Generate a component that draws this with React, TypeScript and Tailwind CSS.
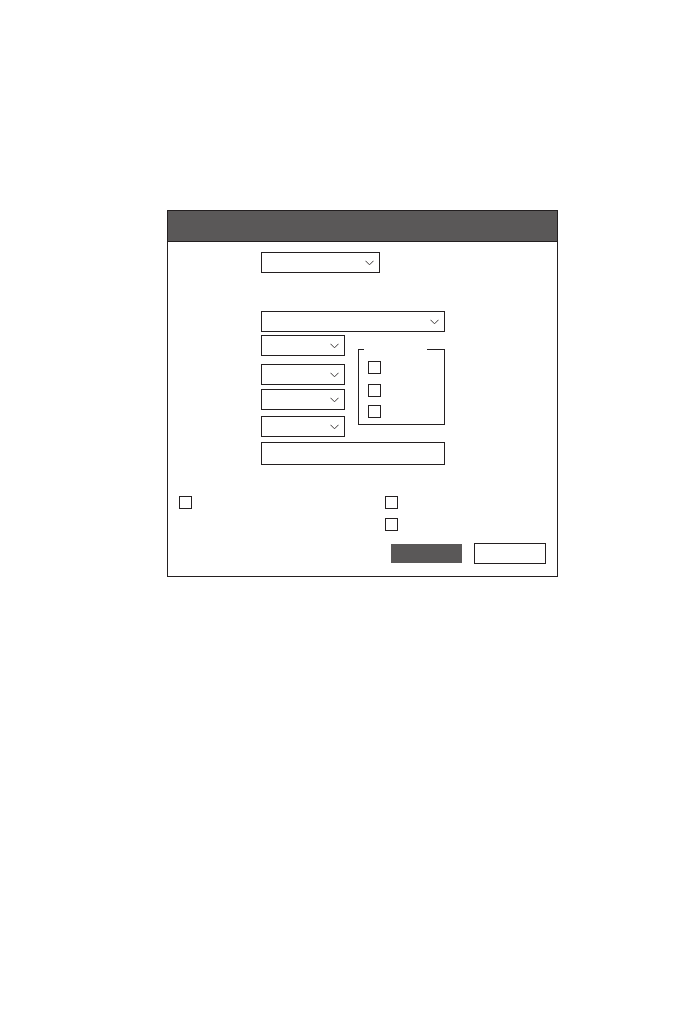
import React from "react";

const line = "border-[#231f20]";

const Chevron = () => (
  <svg className="w-[9px] h-[6px]" viewBox="0 0 9 6" fill="none">
    <polyline points="0.5,0.8 4.5,4.8 8.5,0.8" stroke="#3a3637" strokeWidth="1" />
  </svg>
);

const Select: React.FC<{ w: string; h?: string }> = ({ w, h = "h-[21px]" }) => (
  <div className={`${w} ${h} border ${line} bg-white flex items-center justify-end pr-[5px]`}>
    <Chevron />
  </div>
);

const Box = () => <div className={`w-[13px] h-[13px] border ${line} bg-white`} />;

export default function App() {
  return (
    <div className="min-h-[1020px] w-[680px] bg-white pt-[210px] pl-[167px]">
      <div className={`w-[391px] border ${line} bg-white`}>
        {/* Title bar */}
        <div className={`h-[31px] bg-[#5a5858] border-b ${line}`} />

        {/* Form fields */}
        <div className="pl-[93px]">
          <div className="pt-[10px]">
            <Select w="w-[119px]" />
          </div>
          <div className="mt-[38px]">
            <Select w="w-[184px]" />
          </div>

          <div className="flex">
            <div className="flex flex-col w-[84px]">
              <div className="mt-[3px]">
                <Select w="w-[84px]" />
              </div>
              <div className="mt-[8px]">
                <Select w="w-[84px]" />
              </div>
              <div className="mt-[4px]">
                <Select w="w-[84px]" />
              </div>
              <div className="mt-[6px]">
                <Select w="w-[84px]" />
              </div>
            </div>

            {/* Group box */}
            <div
              className={`relative ml-[13px] mt-[17px] w-[87px] h-[76px] border ${line} pl-[9px] pt-[11px] flex flex-col`}
            >
              <div className="absolute -top-[1px] left-[5px] w-[63px] h-[1px] bg-white" />
              <Box />
              <div className="mt-[10px]">
                <Box />
              </div>
              <div className="mt-[8px]">
                <Box />
              </div>
            </div>
          </div>

          <div className={`mt-[5px] w-[184px] h-[23px] border ${line} bg-white`} />
        </div>

        {/* Options */}
        <div className="flex mt-[31px]">
          <div className="w-[217px] pl-[11px]">
            <Box />
          </div>
          <div className="flex flex-col">
            <Box />
            <div className="mt-[9px]">
              <Box />
            </div>
          </div>
        </div>

        {/* Buttons */}
        <div className="flex justify-end items-center gap-[12px] pr-[11px] mt-[12px] pb-[12px]">
          <div className="w-[71px] h-[19px] bg-[#5a5858]" />
          <div className={`w-[72px] h-[21px] border ${line} bg-white`} />
        </div>
      </div>
    </div>
  );
}
